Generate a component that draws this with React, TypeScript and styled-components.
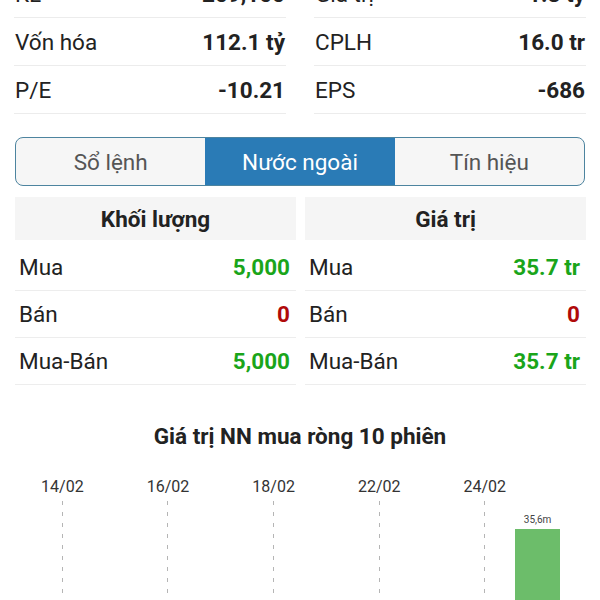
import React from "react";
import styled, { createGlobalStyle } from "styled-components";

const Global = createGlobalStyle`
  html, body { margin: 0; padding: 0; background: #fff; }
  body { font-family: Roboto, "Noto Sans", "Liberation Sans", sans-serif; color: #222; overflow: hidden; }
  * { box-sizing: border-box; }
`;

const Page = styled.div`
  width: 600px;
  height: 600px;
  overflow: hidden;
  display: flex;
  flex-direction: column;
`;

const Stats = styled.div`
  margin-top: -30px;
  padding: 0 14px 0 14px;
  display: grid;
  grid-template-columns: 1fr 1fr;
  column-gap: 28px;
`;

const StatCol = styled.div`
  display: flex;
  flex-direction: column;
`;

const StatRow = styled.div`
  height: 48px;
  border-bottom: 1px solid #ececec;
  display: flex;
  align-items: center;
  justify-content: space-between;
  padding: 0 1px 0 1px;
  font-size: 22.5px;
`;

const StatLabel = styled.span`
  color: #222;
`;

const StatValue = styled.span`
  font-weight: 700;
  color: #222;
`;

const Tabs = styled.div`
  margin: 23px 15px 0 15px;
  height: 49px;
  border: 1.5px solid #4d849f;
  border-radius: 8px;
  overflow: hidden;
  display: grid;
  grid-template-columns: 1fr 1fr 1fr;
  background: #f6f6f6;
`;

const Tab = styled.div<{ $active?: boolean }>`
  display: flex;
  align-items: center;
  justify-content: center;
  font-size: 22.5px;
  color: ${(p) => (p.$active ? "#ffffff" : "#555")};
  background: ${(p) => (p.$active ? "#2a7bb6" : "transparent")};
`;

const Tables = styled.div`
  margin: 11px 14px 0 15px;
  display: grid;
  grid-template-columns: 281px 281px;
  column-gap: 9px;
`;

const Table = styled.div`
  display: flex;
  flex-direction: column;
`;

const TableHead = styled.div`
  height: 43px;
  background: #f5f5f5;
  display: flex;
  align-items: center;
  justify-content: center;
  font-size: 22.5px;
  font-weight: 700;
  color: #222;
  margin-bottom: 4px;
`;

const TRow = styled.div`
  height: 47px;
  border-bottom: 1px solid #ededed;
  display: flex;
  align-items: center;
  justify-content: space-between;
  padding: 0 6px 0 4px;
  font-size: 22.5px;
`;

const TLabel = styled.span`
  color: #222;
`;

const TValue = styled.span<{ $tone: "up" | "down" }>`
  font-weight: 700;
  color: ${(p) => (p.$tone === "up" ? "#1aa51a" : "#b00a0a")};
`;

const ChartTitle = styled.div`
  margin-top: 39px;
  text-align: center;
  font-size: 22.5px;
  font-weight: 700;
  color: #222;
  line-height: 24px;
`;

const Chart = styled.div`
  margin: 29px 0 0 36px;
  width: 528px;
  display: grid;
  grid-template-columns: repeat(10, 1fr);
  flex: 1;
`;

const Slot = styled.div`
  display: flex;
  flex-direction: column;
  align-items: center;
`;

const DateLabel = styled.div`
  height: 20px;
  font-size: 16px;
  line-height: 20px;
  color: #333;
  white-space: nowrap;
`;

const Plot = styled.div`
  flex: 1;
  margin-top: 4px;
  display: flex;
  flex-direction: column;
  align-items: center;
  width: 100%;
`;

const GridLine = styled.div`
  width: 1px;
  flex: 1;
  background: repeating-linear-gradient(
    to bottom,
    #b5b5b5 0,
    #b5b5b5 4px,
    transparent 4px,
    transparent 11px
  );
`;

const BarValue = styled.div`
  margin-top: 12px;
  font-size: 10px;
  line-height: 14px;
  color: #444;
`;

const Bar = styled.div`
  margin-top: 2px;
  width: 45px;
  flex: 1;
  background: #6cbd6a;
`;

const stats = [
  [
    ["KL", "209,100"],
    ["Vốn hóa", "112.1 tỷ"],
    ["P/E", "-10.21"],
  ],
  [
    ["Giá trị", "1.8 tỷ"],
    ["CPLH", "16.0 tr"],
    ["EPS", "-686"],
  ],
];

const tables: { title: string; rows: [string, string, "up" | "down"][] }[] = [
  {
    title: "Khối lượng",
    rows: [
      ["Mua", "5,000", "up"],
      ["Bán", "0", "down"],
      ["Mua-Bán", "5,000", "up"],
    ],
  },
  {
    title: "Giá trị",
    rows: [
      ["Mua", "35.7 tr", "up"],
      ["Bán", "0", "down"],
      ["Mua-Bán", "35.7 tr", "up"],
    ],
  },
];

const slots = ["14/02", "", "16/02", "", "18/02", "", "22/02", "", "24/02", ""];

export default function App() {
  return (
    <Page>
      <Global />
      <Stats>
        {stats.map((col, i) => (
          <StatCol key={i}>
            {col.map(([l, v]) => (
              <StatRow key={l}>
                <StatLabel>{l}</StatLabel>
                <StatValue>{v}</StatValue>
              </StatRow>
            ))}
          </StatCol>
        ))}
      </Stats>
      <Tabs>
        <Tab>Sổ lệnh</Tab>
        <Tab $active>Nước ngoài</Tab>
        <Tab>Tín hiệu</Tab>
      </Tabs>
      <Tables>
        {tables.map((t) => (
          <Table key={t.title}>
            <TableHead>{t.title}</TableHead>
            {t.rows.map(([l, v, tone]) => (
              <TRow key={l}>
                <TLabel>{l}</TLabel>
                <TValue $tone={tone}>{v}</TValue>
              </TRow>
            ))}
          </Table>
        ))}
      </Tables>
      <ChartTitle>Giá trị NN mua ròng 10 phiên</ChartTitle>
      <Chart>
        {slots.map((d, i) => (
          <Slot key={i}>
            <DateLabel>{d}</DateLabel>
            <Plot>
              {d ? <GridLine /> : null}
              {i === 9 ? (
                <>
                  <BarValue>35,6m</BarValue>
                  <Bar />
                </>
              ) : null}
            </Plot>
          </Slot>
        ))}
      </Chart>
    </Page>
  );
}
